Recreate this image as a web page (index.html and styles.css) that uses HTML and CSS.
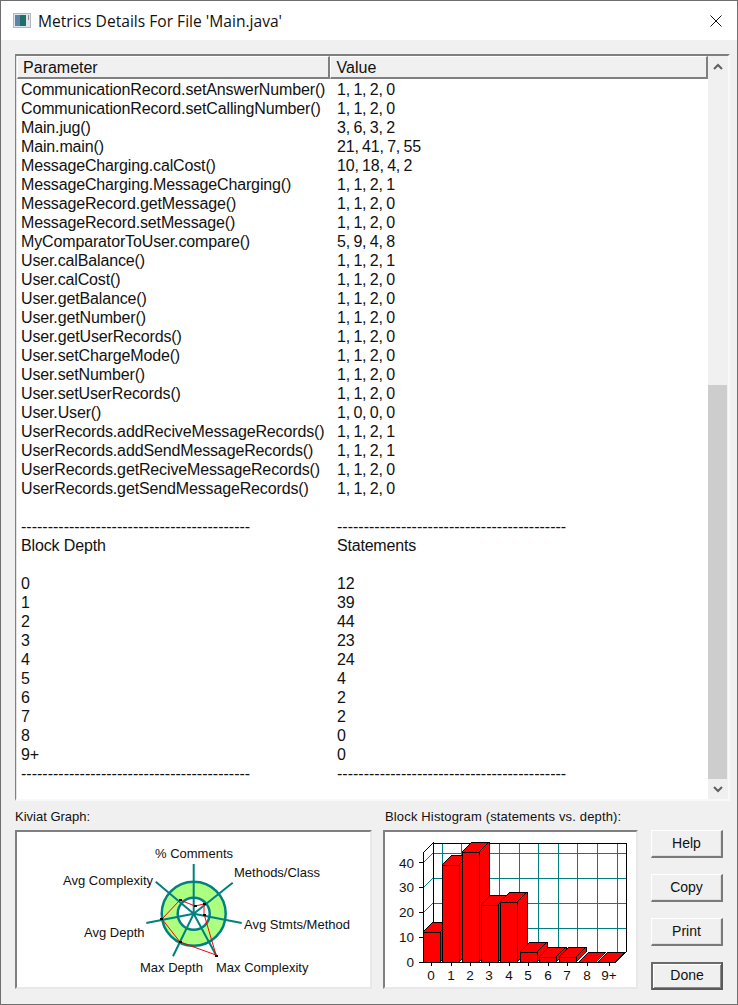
FILE: index.html
```html
<!DOCTYPE html>
<html lang="en">
<head>
<meta charset="utf-8">
<title>Metrics Details For File 'Main.java'</title>
<link rel="stylesheet" href="styles.css">
</head>
<body>
<div class="window">
  <header class="titlebar">
    <svg class="app-icon" width="18" height="15" viewBox="0 0 18 15">
      <rect x="0" y="0" width="18" height="15" fill="#dfe5ea"/>
      <rect x="0.5" y="0.5" width="17" height="14" fill="none" stroke="#b4b8bc"/>
      <rect x="2" y="2" width="5" height="11" fill="#5d83a8"/>
      <rect x="7" y="2" width="6" height="11" fill="#1f6f68"/>
      <rect x="15" y="2" width="1" height="5" fill="#8a8a8a"/>
    </svg>
    <span class="title">Metrics Details For File 'Main.java'</span>
    <svg class="close" width="12" height="12" viewBox="0 0 12 12">
      <path d="M0.5 0.5L11.5 11.5M11.5 0.5L0.5 11.5" stroke="#111" stroke-width="1" fill="none"/>
    </svg>
  </header>
  <main class="content">
    <section class="panel">
      <div class="listarea">
        <div class="head"><div class="hcell hcell-param">Parameter</div><div class="hcell hcell-value">Value</div></div>
        <div class="rows">
          <div class="row"><span class="p">CommunicationRecord.setAnswerNumber()</span><span class="v">1, 1, 2, 0</span></div>
          <div class="row"><span class="p">CommunicationRecord.setCallingNumber()</span><span class="v">1, 1, 2, 0</span></div>
          <div class="row"><span class="p">Main.jug()</span><span class="v">3, 6, 3, 2</span></div>
          <div class="row"><span class="p">Main.main()</span><span class="v">21, 41, 7, 55</span></div>
          <div class="row"><span class="p">MessageCharging.calCost()</span><span class="v">10, 18, 4, 2</span></div>
          <div class="row"><span class="p">MessageCharging.MessageCharging()</span><span class="v">1, 1, 2, 1</span></div>
          <div class="row"><span class="p">MessageRecord.getMessage()</span><span class="v">1, 1, 2, 0</span></div>
          <div class="row"><span class="p">MessageRecord.setMessage()</span><span class="v">1, 1, 2, 0</span></div>
          <div class="row"><span class="p">MyComparatorToUser.compare()</span><span class="v">5, 9, 4, 8</span></div>
          <div class="row"><span class="p">User.calBalance()</span><span class="v">1, 1, 2, 1</span></div>
          <div class="row"><span class="p">User.calCost()</span><span class="v">1, 1, 2, 0</span></div>
          <div class="row"><span class="p">User.getBalance()</span><span class="v">1, 1, 2, 0</span></div>
          <div class="row"><span class="p">User.getNumber()</span><span class="v">1, 1, 2, 0</span></div>
          <div class="row"><span class="p">User.getUserRecords()</span><span class="v">1, 1, 2, 0</span></div>
          <div class="row"><span class="p">User.setChargeMode()</span><span class="v">1, 1, 2, 0</span></div>
          <div class="row"><span class="p">User.setNumber()</span><span class="v">1, 1, 2, 0</span></div>
          <div class="row"><span class="p">User.setUserRecords()</span><span class="v">1, 1, 2, 0</span></div>
          <div class="row"><span class="p">User.User()</span><span class="v">1, 0, 0, 0</span></div>
          <div class="row"><span class="p">UserRecords.addReciveMessageRecords()</span><span class="v">1, 1, 2, 1</span></div>
          <div class="row"><span class="p">UserRecords.addSendMessageRecords()</span><span class="v">1, 1, 2, 1</span></div>
          <div class="row"><span class="p">UserRecords.getReciveMessageRecords()</span><span class="v">1, 1, 2, 0</span></div>
          <div class="row"><span class="p">UserRecords.getSendMessageRecords()</span><span class="v">1, 1, 2, 0</span></div>
          <div class="row"></div>
          <div class="row"><span class="p dash">-------------------------------------------</span><span class="v dash">-------------------------------------------</span></div>
          <div class="row"><span class="p">Block Depth</span><span class="v">Statements</span></div>
          <div class="row"></div>
          <div class="row"><span class="p">0</span><span class="v">12</span></div>
          <div class="row"><span class="p">1</span><span class="v">39</span></div>
          <div class="row"><span class="p">2</span><span class="v">44</span></div>
          <div class="row"><span class="p">3</span><span class="v">23</span></div>
          <div class="row"><span class="p">4</span><span class="v">24</span></div>
          <div class="row"><span class="p">5</span><span class="v">4</span></div>
          <div class="row"><span class="p">6</span><span class="v">2</span></div>
          <div class="row"><span class="p">7</span><span class="v">2</span></div>
          <div class="row"><span class="p">8</span><span class="v">0</span></div>
          <div class="row"><span class="p">9+</span><span class="v">0</span></div>
          <div class="row"><span class="p dash">-------------------------------------------</span><span class="v dash">-------------------------------------------</span></div>
        </div>
      </div>
      <div class="scrollbar">
        <div class="arrow">
          <svg width="10" height="7" viewBox="0 0 10 7"><path d="M1 6L5 2L9 6" fill="none" stroke="#606060" stroke-width="2"/></svg>
        </div>
        <div class="track"><div class="thumb"></div></div>
        <div class="arrow">
          <svg width="10" height="7" viewBox="0 0 10 7"><path d="M1 1L5 5L9 1" fill="none" stroke="#606060" stroke-width="2"/></svg>
        </div>
      </div>
    </section>

    <section class="lower">
      <div class="graph graph-kiviat">
        <div class="caption">Kiviat Graph:</div>
        <div class="chartbox">
          <svg class="chart" width="353" height="155" viewBox="17 832 353 155">
            <circle class="ring-fill" cx="193.7" cy="913.7" r="24" />
            <circle class="ring-line" cx="193.7" cy="913.7" r="32" />
            <circle class="ring-line" cx="193.7" cy="913.7" r="16" />
            <path class="spoke" d="M193.7 913.7L193.7 864M193.7 913.7L232.7 882.7M193.7 913.7L241.7 923M193.7 913.7L216 955M193.7 913.7L173 956.3M193.7 913.7L146.3 923M193.7 913.7L155.7 881.7"/>
            <polygon class="radar" points="195,906 204,904 204,914 216,955 180,942 162,919 180,900"/>
            <path class="vertex" d="M194 905h3v2h-3zM203 903h3v2h-3zM203 914h3v2h-3zM215 955h3v2h-3zM179 941h3v2h-3zM160 918h3v2h-3zM179 899h3v2h-3z"/>
            <text class="chart-text" x="155" y="858">% Comments</text>
            <text class="chart-text" x="234" y="877">Methods/Class</text>
            <text class="chart-text" x="63" y="885">Avg Complexity</text>
            <text class="chart-text" x="244" y="929">Avg Stmts/Method</text>
            <text class="chart-text" x="84" y="937">Avg Depth</text>
            <text class="chart-text" x="140" y="972">Max Depth</text>
            <text class="chart-text" x="216" y="972">Max Complexity</text>
          </svg>
        </div>
      </div>
      <div class="graph graph-hist">
        <div class="caption caption-hist">Block Histogram (statements vs. depth):</div>
        <div class="chartbox">
          <svg class="chart" width="251" height="155" viewBox="385 832 251 155">
            <path class="grid" d="M433 853H626M433 878H626M433 903H626M433 928H626M442 843V952M461 843V952M480 843V952M499 843V952M519 843V952M538 843V952M558 843V952M577 843V952M597 843V952M617 843V952M423 863L433 853M423 888L433 878M423 913L433 903M423 938L433 928"/>
            <path class="axis" d="M433 843H626V952L616 962H423V853L433 843V952L423 962M423 962H419M423 937H419M423 912H419M423 887H419M423 862H419M431 962V966M451 962V966M470 962V966M489 962V966M509 962V966M528 962V966M548 962V966M567 962V966M587 962V966M609 962V966"/>
            <g class="bars">
              <polygon points="433,922 450,922 450,952 440,962 423,962 423,932"/><path d="M423 932H440V962M440 932L450 922"/>
              <polygon points="452,855 469,855 469,952 459,962 442,962 442,865"/><path d="M442 865H459V962M459 865L469 855"/>
              <polygon points="472,842 489,842 489,952 479,962 462,962 462,852"/><path d="M462 852H479V962M479 852L489 842"/>
              <polygon points="491,895 508,895 508,952 498,962 481,962 481,905"/><path d="M481 905H498V962M498 905L508 895"/>
              <polygon points="510,892 527,892 527,952 517,962 500,962 500,902"/><path d="M500 902H517V962M517 902L527 892"/>
              <polygon points="530,942 547,942 547,952 537,962 520,962 520,952"/><path d="M520 952H537V962M537 952L547 942"/>
              <polygon points="549,947 566,947 566,952 556,962 539,962 539,957"/><path d="M539 957H556V962M556 957L566 947"/>
              <polygon points="569,947 586,947 586,952 576,962 559,962 559,957"/><path d="M559 957H576V962M576 957L586 947"/>
              <polygon points="589,952 606,952 596,962 579,962"/>
              <polygon points="608,952 625,952 615,962 598,962"/>
            </g>
            <text class="chart-text tick-y" x="414" y="868">40</text>
            <text class="chart-text tick-y" x="414" y="892">30</text>
            <text class="chart-text tick-y" x="414" y="917">20</text>
            <text class="chart-text tick-y" x="414" y="942">10</text>
            <text class="chart-text tick-y" x="414" y="967">0</text>
            <text class="chart-text tick-x" x="431" y="980">0</text>
            <text class="chart-text tick-x" x="451" y="980">1</text>
            <text class="chart-text tick-x" x="470" y="980">2</text>
            <text class="chart-text tick-x" x="489" y="980">3</text>
            <text class="chart-text tick-x" x="509" y="980">4</text>
            <text class="chart-text tick-x" x="528" y="980">5</text>
            <text class="chart-text tick-x" x="548" y="980">6</text>
            <text class="chart-text tick-x" x="567" y="980">7</text>
            <text class="chart-text tick-x" x="587" y="980">8</text>
            <text class="chart-text tick-x" x="609" y="980">9+</text>
          </svg>
        </div>
      </div>
      <div class="buttons">
        <button class="btn" type="button">Help</button>
        <button class="btn" type="button">Copy</button>
        <button class="btn" type="button">Print</button>
        <button class="btn btn-default" type="button">Done</button>
      </div>
    </section>
  </main>
</div>
</body>
</html>
```

FILE: styles.css
```css
* { box-sizing: border-box; }
html, body { margin: 0; padding: 0; }
body {
  background: #f0f0f0;
  font-family: "Liberation Sans", Arial, sans-serif;
  color: #000;
}
.window {
  width: 738px;
  height: 1005px;
  border: 1px solid #6f6f6f;
  display: flex;
  flex-direction: column;
  background: #f0f0f0;
  overflow: hidden;
}
.titlebar {
  height: 39px;
  flex: none;
  background: #fff;
  display: flex;
  align-items: center;
  padding: 0 15px 0 12px;
}
.app-icon { flex: none; margin-right: 7px; }
.title {
  flex: 1;
  font-family: "Open Sans", "Noto Sans", sans-serif;
  font-size: 15.6px;
  color: #111;
  line-height: 20px;
}
.close { flex: none; }
.content {
  flex: 1;
  display: flex;
  flex-direction: column;
  padding: 14px 0 0 14px;
}
.panel {
  width: 715px;
  height: 747px;
  flex: none;
  display: flex;
  background: #fff;
  border: 2px solid;
  border-color: #808080 #f8f8f8 #f8f8f8 #808080;
  border-left-width: 1px;
}
.listarea {
  width: 692px;
  flex: none;
  display: flex;
  flex-direction: column;
  border-left: 1px solid #e4e4e4;
}
.head {
  height: 23px;
  flex: none;
  display: flex;
  font-size: 16px;
}
.hcell {
  background: #f0f0f0;
  border: 1px solid;
  border-color: #fff #808080 #808080 #fff;
  border-right-width: 2px;
  border-bottom-width: 2px;
  padding: 1px 0 0 5px;
  line-height: 20px;
  color: #111;
}
.hcell-param { width: 313px; }
.hcell-value { width: 379px; padding-left: 6px; }
.rows {
  padding: 1px 0 0 4px;
}
.row {
  height: 19px;
  display: flex;
  font-size: 16px;
  line-height: 19px;
  color: #111;
  white-space: nowrap;
}
.p { width: 316px; flex: none; letter-spacing: -0.14px; }
.v { letter-spacing: -0.2px; word-spacing: -0.8px; }
.p.dash, .v.dash { letter-spacing: 0; }
.scrollbar {
  width: 20px;
  flex: none;
  display: flex;
  flex-direction: column;
  background: #f0f0f0;
}
.arrow {
  height: 20px;
  flex: none;
  display: flex;
  align-items: center;
  justify-content: center;
}
.track {
  flex: 1;
  display: flex;
  flex-direction: column;
  justify-content: flex-end;
}
.thumb {
  height: 394px;
  width: 19px;
  background: #cdcdcd;
}
.lower {
  display: flex;
  margin-top: 8px;
}
.graph { display: flex; flex-direction: column; flex: none; }
.graph-kiviat { width: 357px; margin-right: 11px; }
.graph-hist { width: 255px; margin-right: 13px; }
.caption {
  height: 21px;
  font-size: 13px;
  line-height: 16px;
  color: #111;
}
.caption-hist { padding-left: 2px; letter-spacing: 0.15px; white-space: nowrap; }
.chartbox {
  height: 159px;
  background: #fff;
  border: 2px solid;
  border-color: #808080 #e8e8e8 #e8e8e8 #808080;
}
.chart { display: block; }
.chart-text {
  font-family: "Liberation Sans", Arial, sans-serif;
  font-size: 13px;
  fill: #111;
}
.tick-y { text-anchor: end; font-size: 13.5px; }
.tick-x { text-anchor: middle; font-size: 13.5px; }
.ring-fill { fill: none; stroke: #adff7f; stroke-width: 16; }
.ring-line { fill: none; stroke: #008080; stroke-width: 2.5; }
.spoke { fill: none; stroke: #008080; stroke-width: 2; }
.radar { fill: none; stroke: #ff0000; stroke-width: 1; }
.vertex { fill: #000; shape-rendering: crispEdges; }
.grid { fill: none; stroke: #008080; stroke-width: 1; shape-rendering: crispEdges; }
.axis { fill: none; stroke: #000; stroke-width: 1; shape-rendering: crispEdges; }
.bars polygon { fill: #ff0000; stroke: #000; stroke-width: 1; shape-rendering: crispEdges; }
.bars path { fill: none; stroke: #000; stroke-width: 1; shape-rendering: crispEdges; }
.buttons {
  width: 72px;
  flex: none;
  display: flex;
  flex-direction: column;
  gap: 16px;
  padding-top: 21px;
}
.btn {
  height: 28px;
  width: 72px;
  padding: 0 0 2px;
  font-family: "Liberation Sans", Arial, sans-serif;
  font-size: 14px;
  color: #111;
  background: #f0f0f0;
  border: 1px solid;
  border-color: #fff #7a7a7a #7a7a7a #fff;
  border-right-width: 2px;
  border-bottom-width: 2px;
  box-shadow: inset -1px -1px 0 #e0e0e0;
}
.btn-default {
  border: 2px solid;
  border-color: #6a6a6a #5a5a5a #5a5a5a #6a6a6a;
  box-shadow: inset 1px 1px 0 #fff, inset -1px -1px 0 #8a8a8a;
}
```
